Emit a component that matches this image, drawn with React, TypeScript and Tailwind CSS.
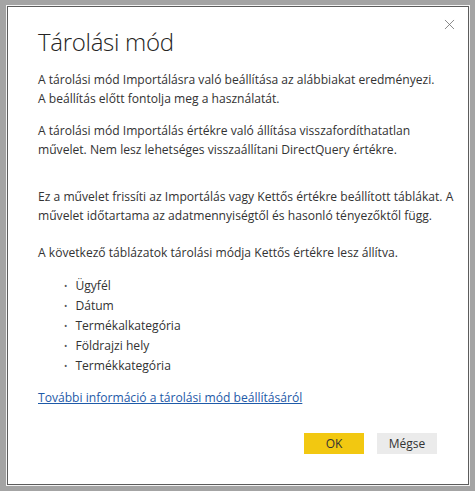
import { X } from 'lucide-react';

const TABLES = ['Ügyfél', 'Dátum', 'Termékalkategória', 'Földrajzi hely', 'Termékkategória'];

export default function App() {
  return (
    <div className="h-[491px] w-[475px] bg-[#a4a4a4] pl-[6px] pt-[5px]">
      <div className="h-[481px] w-[464px] border border-[#f4f4f4]">
        <div
          className="relative flex h-full flex-col border border-[#5c5c5c] bg-white pl-[30px] pr-[20px] text-[#333333]"
          style={{ fontFamily: '"Open Sans", "Noto Sans", sans-serif' }}
        >
          <button className="absolute right-[10px] top-[9px] text-[#6b6b6b]" aria-label="Bezárás">
            <X size={17} strokeWidth={1.1} />
          </button>

          <h1 className="mt-[19px] text-[24px] font-light leading-[32px] tracking-[-0.3px] text-[#252423]">
            Tárolási mód
          </h1>

          <div className="mt-[12px] whitespace-nowrap text-[12.1px] leading-[19px]">
            <p>
              A tárolási mód Importálásra való beállítása az alábbiakat eredményezi.
              <br />
              A beállítás előtt fontolja meg a használatát.
            </p>
            <p className="mt-[13px]">
              A tárolási mód Importálás értékre való állítása visszafordíthatatlan
              <br />
              művelet. Nem lesz lehetséges visszaállítani DirectQuery értékre.
            </p>
            <p className="mt-[28px]">
              Ez a művelet frissíti az Importálás vagy Kettős értékre beállított táblákat. A
              <br />
              művelet időtartama az adatmennyiségtől és hasonló tényezőktől függ.
            </p>
            <p className="mt-[18px]">A következő táblázatok tárolási módja Kettős értékre lesz állítva.</p>
            <ul className="mt-[14px] flex flex-col gap-[1px] pl-[26px]">
              {TABLES.map((t) => (
                <li key={t} className="flex items-center gap-[8px]">
                  <span className="text-[9px] text-[#555555]">•</span>
                  <span>{t}</span>
                </li>
              ))}
            </ul>
            <a href="#" className="mt-[13px] inline-block text-[#1e5aa8] underline">
              További információ a tárolási mód beállításáról
            </a>
          </div>

          <div className="mt-auto mb-[30px] flex justify-end gap-[13px] pr-[11px]">
            <button className="h-[21px] w-[60px] bg-[#f2c811] text-[12px] text-[#333333]">OK</button>
            <button className="h-[21px] w-[60px] bg-[#ebebeb] text-[12px] text-[#333333]">Mégse</button>
          </div>
        </div>
      </div>
    </div>
  );
}
